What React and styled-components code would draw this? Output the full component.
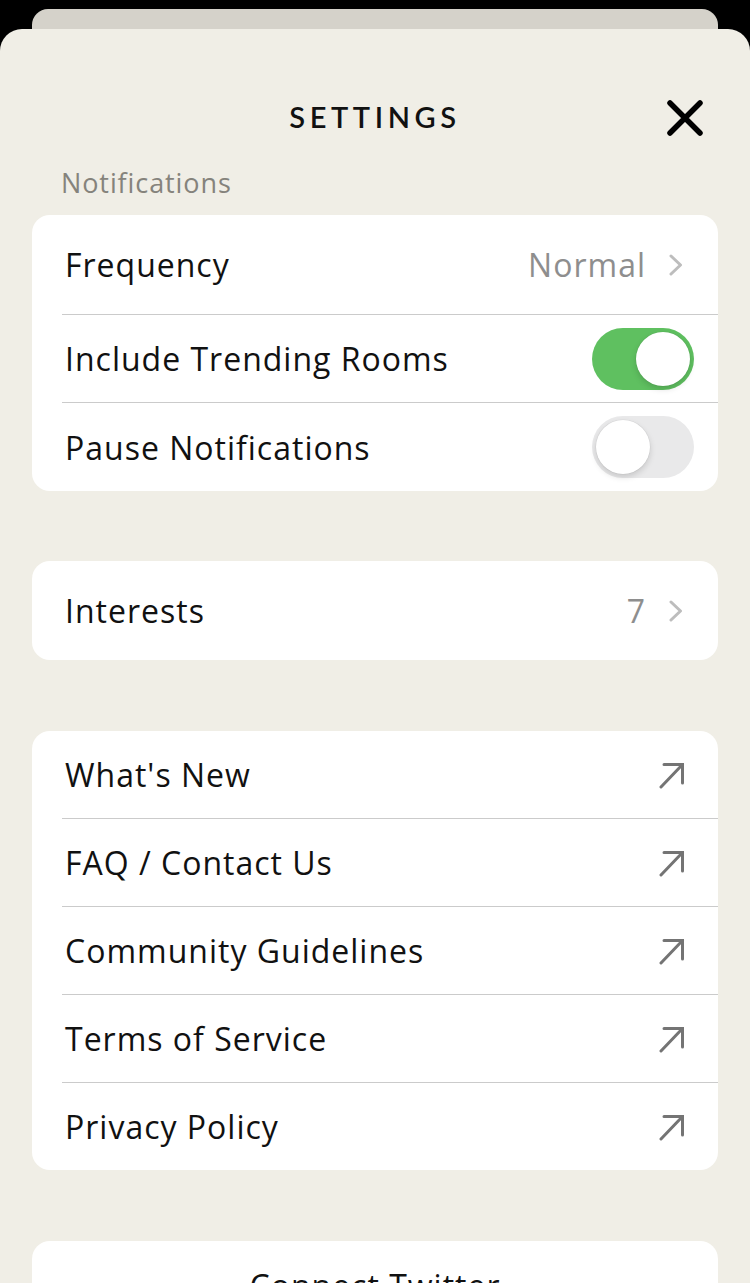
import React from "react";
import styled, { createGlobalStyle } from "styled-components";

const Global = createGlobalStyle`
  html, body { margin: 0; padding: 0; background: #000; }
  body { font-family: "Open Sans", Lato, sans-serif; -webkit-font-smoothing: antialiased; }
  #root { height: 1283px; overflow: hidden; }
`;

const Page = styled.div`
  display: flex;
  flex-direction: column;
  padding-top: 9px;
  height: 1283px;
  box-sizing: border-box;
`;

const BackCard = styled.div`
  flex-shrink: 0;
  height: 20px;
  margin: 0 32px;
  background: #d5d2ca;
  border-radius: 16px 16px 0 0;
`;

const Sheet = styled.div`
  flex: 1;
  min-height: 0;
  overflow: hidden;
  background: #f0eee6;
  border-radius: 22px 22px 0 0;
  padding: 57px 32px 0;
  display: flex;
  flex-direction: column;
`;

const Header = styled.div`
  position: relative;
  flex-shrink: 0;
  height: 60px;
  display: flex;
  align-items: center;
  justify-content: center;
`;

const Title = styled.h1`
  margin: 0;
  font-family: Lato, sans-serif;
  font-size: 29px;
  font-weight: 600;
  letter-spacing: 4.6px;
  color: #111;
`;

const CloseBtn = styled.button`
  position: absolute;
  right: 15px;
  top: 14px;
  width: 36px;
  height: 36px;
  padding: 0;
  border: 0;
  background: none;
  display: flex;
  align-items: center;
  justify-content: center;
`;

const SectionLabel = styled.div`
  flex-shrink: 0;
  margin: 22px 0 17px 29px;
  font-size: 27px;
  line-height: 30px;
  letter-spacing: 0.9px;
  color: #85837c;
`;

const Card = styled.div`
  flex-shrink: 0;
  background: #fff;
  border-radius: 18px;
  margin-bottom: ${(p) => p.$mb || 0}px;
  overflow: hidden;
`;

const Row = styled.div`
  height: ${(p) => p.$h || 88}px;
  margin-left: 30px;
  padding: 0 ${(p) => p.$pr || 35}px 0 3px;
  display: flex;
  align-items: center;
  justify-content: space-between;
  box-sizing: border-box;
  & + & {
    border-top: 1px solid #cbcbcb;
  }
`;

const Label = styled.span`
  font-size: 32px;
  color: #111;
  letter-spacing: 1px;
`;

const Right = styled.span`
  display: flex;
  align-items: center;
  gap: 23px;
  font-size: 32px;
  color: #8e8e8e;
  letter-spacing: 1px;
`;

const Toggle = styled.div`
  width: 102px;
  height: 62px;
  border-radius: 31px;
  background: ${(p) => (p.$on ? "#5fc060" : "#e9e9ea")};
  display: flex;
  align-items: center;
  justify-content: ${(p) => (p.$on ? "flex-end" : "flex-start")};
  padding: 0 4px;
  box-sizing: border-box;
`;

const Knob = styled.div`
  width: 54px;
  height: 54px;
  border-radius: 50%;
  background: #fff;
  box-shadow: 0 3px 6px rgba(0, 0, 0, 0.15), 0 0 0 0.5px rgba(0, 0, 0, 0.06);
`;

const CenterRow = styled.div`
  height: 88px;
  display: flex;
  align-items: center;
  justify-content: center;
  font-size: 32px;
  color: #111;
  letter-spacing: 1px;
`;

const Chevron = () => (
  <svg width="14" height="22" viewBox="0 0 14 22">
    <path d="M2 2 L11.5 11 L2 20" fill="none" stroke="#bdbdbd" strokeWidth="3" strokeLinecap="round" strokeLinejoin="round" />
  </svg>
);

const Arrow = () => (
  <svg width="28" height="28" viewBox="0 0 28 28">
    <path d="M4 26 L25.5 3.5 M7 3.5 H25.5 V22" fill="none" stroke="#747474" strokeWidth="3" strokeLinecap="round" strokeLinejoin="miter" />
  </svg>
);

const links = ["What's New", "FAQ / Contact Us", "Community Guidelines", "Terms of Service", "Privacy Policy"];

export default function App() {
  return (
    <>
      <Global />
      <Page>
        <BackCard />
        <Sheet>
          <Header>
            <Title>SETTINGS</Title>
            <CloseBtn aria-label="Close">
              <svg width="36" height="36" viewBox="0 0 36 36">
                <path d="M3 3 L33 33 M33 3 L3 33" stroke="#000" strokeWidth="5.5" strokeLinecap="round" />
              </svg>
            </CloseBtn>
          </Header>
          <SectionLabel>Notifications</SectionLabel>
          <Card $mb={70}>
            <Row $h={99}>
              <Label>Frequency</Label>
              <Right>
                Normal
                <Chevron />
              </Right>
            </Row>
            <Row $pr={24}>
              <Label>Include Trending Rooms</Label>
              <Toggle $on>
                <Knob />
              </Toggle>
            </Row>
            <Row $h={89} $pr={24}>
              <Label>Pause Notifications</Label>
              <Toggle>
                <Knob />
              </Toggle>
            </Row>
          </Card>
          <Card $mb={71}>
            <Row $h={99}>
              <Label>Interests</Label>
              <Right>
                7
                <Chevron />
              </Right>
            </Row>
          </Card>
          <Card $mb={71}>
            {links.map((l, i) => (
              <Row key={l} $h={i === 0 ? 87 : 88} $pr={33}>
                <Label>{l}</Label>
                <Arrow />
              </Row>
            ))}
          </Card>
          <Card>
            <CenterRow>Connect Twitter</CenterRow>
          </Card>
        </Sheet>
      </Page>
    </>
  );
}
